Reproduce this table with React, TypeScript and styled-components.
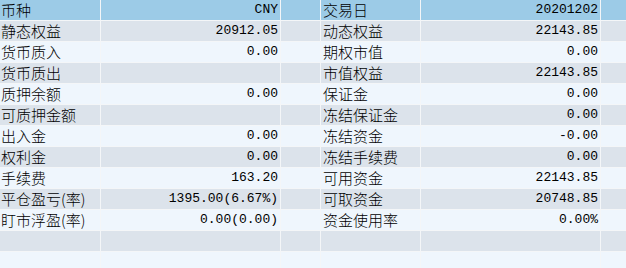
import React from "react";
import styled, { createGlobalStyle } from "styled-components";

const GlobalStyle = createGlobalStyle`
  html, body {
    margin: 0;
    padding: 0;
    background: #eff6fd;
    overflow: hidden;
  }
`;

const COLORS = {
  HEADER: "#9ccbe7",
  ROW_DARK: "#dce3eb",
  ROW_LIGHT: "#eff6fd",
  LINE: "#f4f6f8",
  TEXT: "#000000",
};

const Table = styled.div`
  width: 626px;
  height: 268px;
  overflow: hidden;
  display: flex;
  flex-direction: column;
`;

const Row = styled.div<{ $tone: "header" | "dark" | "light" }>`
  display: grid;
  grid-template-columns: 101px 180px 40px 100px 180px 1fr;
  height: 21px;
  flex: 0 0 21px;
  box-sizing: border-box;
  border-bottom: 1px solid ${COLORS.LINE};
  background: ${(p) =>
    p.$tone === "header"
      ? COLORS.HEADER
      : p.$tone === "dark"
      ? COLORS.ROW_DARK
      : COLORS.ROW_LIGHT};
`;

const Cell = styled.div`
  box-sizing: border-box;
  border-right: 1px solid ${COLORS.LINE};
  height: 20px;
  overflow: hidden;
  white-space: nowrap;
  color: ${COLORS.TEXT};
`;

const Label = styled(Cell)<{ $indent?: number }>`
  font-family: "Noto Sans CJK SC", "Liberation Mono", monospace;
  font-weight: 300;
  font-size: 15px;
  line-height: 19px;
  padding-left: ${(p) => p.$indent ?? 1}px;
`;

const Value = styled(Cell)`
  font-family: "Liberation Mono", "Noto Sans CJK SC", monospace;
  font-size: 13px;
  line-height: 20px;
  text-align: right;
  padding-right: 2px;
`;

const Spacer = styled(Cell)``;

const Filler = styled.div``;

type Line = [string, string, string, string];

const rows: Line[] = [
  ["币种", "CNY", "交易日", "20201202"],
  ["静态权益", "20912.05", "动态权益", "22143.85"],
  ["货币质入", "0.00", "期权市值", "0.00"],
  ["货币质出", "", "市值权益", "22143.85"],
  ["质押余额", "0.00", "保证金", "0.00"],
  ["可质押金额", "", "冻结保证金", "0.00"],
  ["出入金", "0.00", "冻结资金", "-0.00"],
  ["权利金", "0.00", "冻结手续费", "0.00"],
  ["手续费", "163.20", "可用资金", "22143.85"],
  ["平仓盈亏(率)", "1395.00(6.67%)", "可取资金", "20748.85"],
  ["盯市浮盈(率)", "0.00(0.00)", "资金使用率", "0.00%"],
  ["", "", "", ""],
  ["", "", "", ""],
];

export default function App() {
  return (
    <>
      <GlobalStyle />
      <Table>
        {rows.map((r, i) => (
          <Row key={i} $tone={i === 0 ? "header" : i % 2 === 1 ? "dark" : "light"}>
            <Label>{r[0]}</Label>
            <Value>{r[1]}</Value>
            <Spacer />
            <Label $indent={2}>{r[2]}</Label>
            <Value>{r[3]}</Value>
            <Filler />
          </Row>
        ))}
      </Table>
    </>
  );
}
